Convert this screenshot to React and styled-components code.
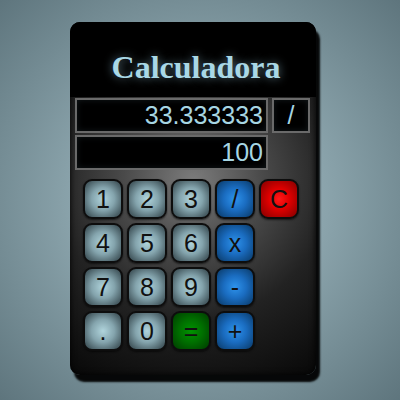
import React, { useState } from "react";
import styled, { createGlobalStyle } from "styled-components";

const GlobalStyle = createGlobalStyle`
  html, body {
    margin: 0;
    height: 100%;
  }
  body {
    background: radial-gradient(circle at 50% 50%, #a9bec5 0%, #8aa3ab 45%, #5e757d 100%);
    font-family: "Liberation Sans", Arial, sans-serif;
  }
`;

const Page = styled.div`
  padding: 22px 0 0 70px;
`;

const Calc = styled.div`
  width: 246px;
  border-radius: 10px;
  overflow: hidden;
  background: radial-gradient(circle at 50% 45%, #7c7c7c 0%, #4a4a4a 30%, #222 60%, #080808 100%);
  box-shadow: inset 0 0 6px #000, 4px 7px 2px rgba(0, 0, 0, 0.95);
  padding-bottom: 24px;
`;

const Header = styled.div`
  height: 75px;
  box-sizing: border-box;
  padding-top: 29px;
  background: #000;
  text-align: center;
`;

const Title = styled.h1`
  margin: 0;
  font-family: "Liberation Serif", "Times New Roman", serif;
  font-size: 32px;
  line-height: 32px;
  font-weight: bold;
  color: #a9d8e6;
  text-shadow: 0 0 10px rgba(160, 210, 230, 0.55);
  padding-left: 6px;
`;

const Screen = styled.div`
  display: grid;
  grid-template-columns: 193px 38px;
  grid-template-rows: 35px 35px;
  column-gap: 4px;
  row-gap: 2px;
  padding: 1px 0 0 5px;
`;

const Display = styled.div`
  box-sizing: border-box;
  border: 2px solid #6a6a6a;
  background: #000;
  color: #a7d6e3;
  font-size: 25px;
  line-height: 31px;
  text-align: ${props => (props.center ? "center" : "right")};
  padding-right: ${props => (props.center ? "0" : "3px")};
  box-shadow: inset 0 0 6px rgba(120, 160, 180, 0.15);
`;

const Keypad = styled.div`
  display: grid;
  grid-template-columns: repeat(5, 40px);
  grid-auto-rows: 40px;
  gap: 4px;
  padding: 9px 0 0 13px;
`;

const keyColors = {
  digit: "radial-gradient(circle at 50% 50%, #b0d4dc 0%, #84a4ad 45%, #4d636a 80%, #33434a 100%)",
  op: "radial-gradient(circle at 50% 50%, #2e93ec 0%, #1a6cc0 45%, #0e477f 85%, #0a3563 100%)",
  clear: "radial-gradient(circle at 50% 50%, #ff1a1a 0%, #e00000 40%, #9a0000 85%, #700000 100%)",
  equal: "radial-gradient(circle at 50% 50%, #009400 0%, #007000 45%, #004a00 85%, #003400 100%)"
};

const Key = styled.button`
  box-sizing: border-box;
  width: 40px;
  height: 40px;
  padding: 0;
  border: 2px solid #0d0d0d;
  border-radius: 9px;
  background: ${props => keyColors[props.kind]};
  color: #111;
  font-family: "Liberation Sans", Arial, sans-serif;
  font-size: 25px;
  line-height: 36px;
  cursor: pointer;
  box-shadow: 0 1px 2px rgba(0, 0, 0, 0.6);
`;

const keys = [
  ["1", "digit"], ["2", "digit"], ["3", "digit"], ["/", "op"], ["C", "clear"],
  ["4", "digit"], ["5", "digit"], ["6", "digit"], ["x", "op"], null,
  ["7", "digit"], ["8", "digit"], ["9", "digit"], ["-", "op"], null,
  [".", "digit"], ["0", "digit"], ["=", "equal"], ["+", "op"], null
];

export default function App() {
  const [prev] = useState("33.333333");
  const [op] = useState("/");
  const [current] = useState("100");

  return (
    <Page>
      <GlobalStyle />
      <Calc>
        <Header>
          <Title>Calculadora</Title>
        </Header>
        <Screen>
          <Display>{prev}</Display>
          <Display center>{op}</Display>
          <Display>{current}</Display>
        </Screen>
        <Keypad>
          {keys.map((k, i) =>
            k ? (
              <Key key={i} kind={k[1]}>
                {k[0]}
              </Key>
            ) : (
              <span key={i} />
            )
          )}
        </Keypad>
      </Calc>
    </Page>
  );
}
